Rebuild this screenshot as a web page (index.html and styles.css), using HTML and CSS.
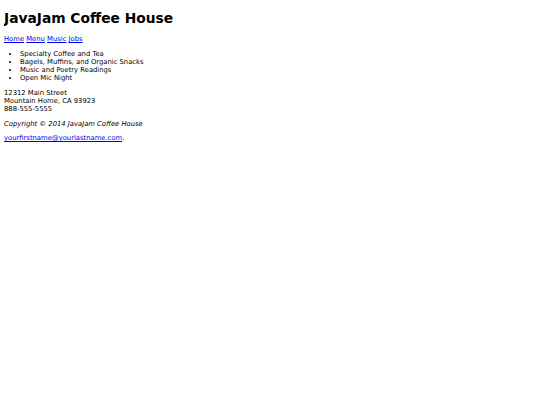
FILE: index.html
```html
<!DOCTYPE html>
<html lang="en">
<head>
<meta charset="utf-8">
<title>JavaJam Coffee House</title>
<link rel="stylesheet" href="styles.css">
</head>
<body>
<h1 class="title">JavaJam Coffee House</h1>
<nav class="nav"><a href="#">Home</a> <a href="#">Menu</a> <a href="#">Music</a> <a href="#">Jobs</a></nav>
<ul class="features">
<li>Specialty Coffee and Tea</li>
<li>Bagels, Muffins, and Organic Snacks</li>
<li>Music and Poetry Readings</li>
<li>Open Mic Night</li>
</ul>
<div class="address">12312 Main Street<br>Mountain Home, CA 93923<br>888-555-5555</div>
<p class="copyright">Copyright &copy; 2014 JavaJam Coffee House</p>
<p class="contact"><a href="#">yourfirstname@yourlastname.com</a>.</p>
</body>
</html>
```
FILE: styles.css
```css
body {
  margin: 4px;
  font-family: "DejaVu Sans", Verdana, sans-serif;
  font-size: 6.8px;
  line-height: 8px;
  color: #000;
  background: #fff;
}
.title {
  font-size: 13.8px;
  line-height: 16px;
  margin: 6px 0 9px;
}
.nav a, .contact a {
  color: #0000ee;
}
.features {
  margin: 7px 0;
  padding-left: 16px;
}
.address {
  margin: 7px 0;
}
.copyright {
  font-style: italic;
  margin: 7px 0 6px;
}
.contact {
  margin: 6px 0;
}
```
